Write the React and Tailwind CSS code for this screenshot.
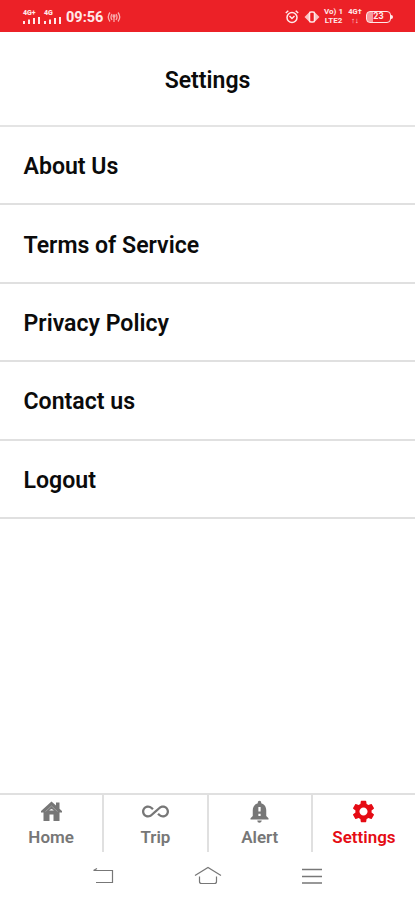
import React, { useState } from "react";
import {
    MdAllInclusive,
    MdNotificationImportant,
    MdSettings,
} from "react-icons/md";

const menuItems = [
    "About Us",
    "Terms of Service",
    "Privacy Policy",
    "Contact us",
    "Logout",
];

const HouseIcon = ({ className }) => (
    <svg viewBox="0 0 27 27" className={className} fill="currentColor">
        <path d="M13.5 3.5 18 7.5V4.5H21.5V10.7L24 13V14.5H21.5V23H15.5V16.5H11.5V23H5.5V14.5H3V13z" />
        <path
            d="M7.5 13.5 13.5 8 19.5 13.5"
            fill="none"
            stroke="white"
            strokeWidth="0.7"
            opacity="0.4"
        />
        <path d="M11.2 12.6Q13.5 9.3 15.8 12.6z" fill="white" />
    </svg>
);

const tabs = [
    { name: "Home", Icon: HouseIcon },
    { name: "Trip", Icon: MdAllInclusive },
    { name: "Alert", Icon: MdNotificationImportant },
    { name: "Settings", Icon: MdSettings },
];

const SignalBars = ({ label }) => (
    <div className="flex h-[14px] w-[17px] flex-col justify-between">
        <span className="text-[7px] leading-[6px] font-black">{label}</span>
        <svg viewBox="0 0 17 7" className="h-[7px] w-[17px]" fill="currentColor">
            <rect x="0" y="4" width="2" height="3" />
            <rect x="5" y="2.5" width="2" height="4.5" />
            <rect x="10" y="1" width="2" height="6" />
            <rect x="15" y="0" width="2" height="7" />
        </svg>
    </div>
);

const StatusBar = () => (
    <div className="flex h-8 shrink-0 items-center justify-between bg-[#ec2127] pr-[22px] pl-[23px] text-[#ffe9e9]">
        <div className="flex items-center pt-0.5">
            <SignalBars label="4G+" />
            <div className="ml-1">
                <SignalBars label="4G" />
            </div>
            <span className="ml-[5px] pt-px text-[14.5px] leading-4 font-bold">
                09:56
            </span>
            <svg
                viewBox="0 0 14 12"
                className="ml-1 h-3 w-3.5 opacity-70"
                fill="none"
                stroke="currentColor"
                strokeWidth="1.3"
            >
                <path d="M3 1.5Q-.5 6 3 10.5M5 3Q3 6 5 9M11 1.5Q14.5 6 11 10.5M9 3Q11 6 9 9M7 5v6" />
                <circle cx="7" cy="5" r="1" />
            </svg>
        </div>

        <div className="flex items-center pt-px">
            <svg
                viewBox="0 0 14 14"
                className="h-3.5 w-3.5"
                fill="none"
                stroke="currentColor"
                strokeWidth="1.5"
            >
                <circle cx="7" cy="7.5" r="5" />
                <path d="M4.5 6 7 8.5 9.5 6M.8 3 3.3 .8M13.2 3 10.7 .8" />
            </svg>
            <svg viewBox="0 0 16 14" className="ml-[5px] h-3.5 w-4">
                <path
                    d="M6 1.5 0.5 7 6 12.5zM10 1.5 15.5 7 10 12.5z"
                    fill="currentColor"
                    opacity="0.8"
                />
                <rect
                    x="5.5"
                    y="2"
                    width="5"
                    height="10"
                    rx="1.5"
                    fill="#ec2127"
                    stroke="currentColor"
                    strokeWidth="1.5"
                />
            </svg>
            <div className="ml-[3px] flex w-[21px] flex-col items-center gap-px text-[8px] leading-[8px] font-bold whitespace-nowrap">
                <div>Vo) 1</div>
                <div>LTE2</div>
            </div>
            <div className="ml-1 flex w-[14px] flex-col items-center gap-px text-[7.5px] leading-[8px] font-bold whitespace-nowrap">
                <div>4G†</div>
                <div>↑↓</div>
            </div>
            <div className="ml-1 flex items-center">
                <div className="flex h-3 w-[25px] items-center justify-center rounded-[4px] border-[1.5px] border-current bg-linear-to-r from-[#f79a9c] from-25% to-transparent to-25% text-[9px] font-bold">
                    23
                </div>
                <div className="h-1 w-0.5 rounded-r bg-current"></div>
            </div>
        </div>
    </div>
);

const SystemNav = () => (
    <div className="flex h-12 items-center text-[#777]">
        <div className="flex w-full items-center justify-center gap-[80px] pr-px">
            <svg
                viewBox="0 0 22 20"
                className="h-5 w-[22px]"
                fill="none"
                stroke="currentColor"
                strokeWidth="1.2"
            >
                <path d="M1.5 4.5H20.5V16.5H4M5 2.5 1.5 4.5" />
            </svg>
            <svg
                viewBox="0 0 28 20"
                className="h-5 w-7"
                fill="none"
                stroke="currentColor"
                strokeWidth="1.2"
            >
                <path d="M1 9.5 14 1.5 27 9.5M5.5 10.5V15.5Q5.5 17.5 7.5 17.5H20.5Q22.5 17.5 22.5 15.5V10.5" />
            </svg>
            <svg
                viewBox="0 0 20 20"
                className="h-5 w-5"
                fill="none"
                stroke="currentColor"
                strokeWidth="1.3"
            >
                <path d="M0 3.5H20M0 10.5H20M0 17H20" />
            </svg>
        </div>
    </div>
);

const App = () => {
    const [active, setActive] = useState("Settings");

    return (
        <div className="flex h-screen w-full flex-col bg-white font-[Roboto,sans-serif] text-[#0b0b0b]">
            <StatusBar />

            <header className="flex h-[95px] shrink-0 items-center justify-center border-b-2 border-[#e4e4e4] pt-[6px]">
                <h1 className="text-[23px] font-semibold">Settings</h1>
            </header>

            <ul className="flex-1">
                {menuItems.map((item) => (
                    <li
                        key={item}
                        className="flex h-[78.4px] cursor-pointer items-center border-b-2 border-[#e0e0e0] px-[23.5px] pt-[4.5px] text-[23.1px] font-semibold"
                    >
                        {item}
                    </li>
                ))}
            </ul>

            <nav className="flex h-[59px] shrink-0 border-t-2 border-[#e0e0e0]">
                {tabs.map(({ name, Icon }) => (
                    <button
                        key={name}
                        onClick={() => setActive(name)}
                        className={
                            `flex w-[104.3px] shrink-0 cursor-pointer flex-col items-center border-r-2 border-[#e0e0e0] pt-[3px] last:w-auto last:flex-1 last:border-r-0 ` +
                            (active === name
                                ? "text-[#e50b14]"
                                : "text-[#777]")
                        }
                    >
                        <Icon className="h-[27px] w-[27px]" />
                        <span className="text-[17px] leading-[25px] font-semibold">
                            {name}
                        </span>
                    </button>
                ))}
            </nav>

            <SystemNav />
        </div>
    );
};

export default App;
